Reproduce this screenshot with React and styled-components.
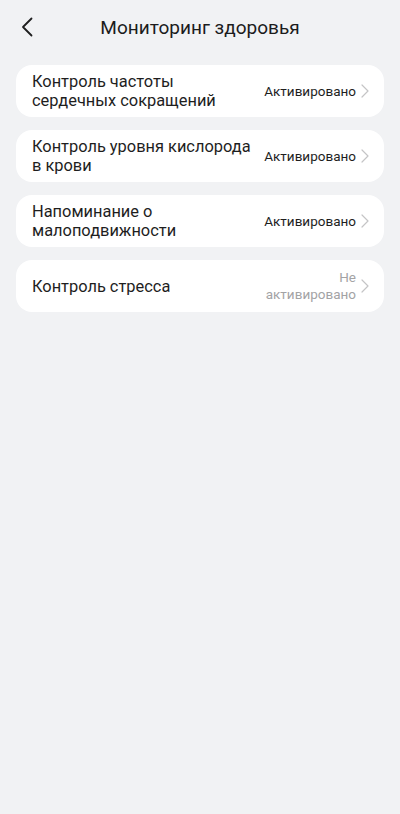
import React from 'react';
import styled, { createGlobalStyle } from 'styled-components';

const GlobalStyle = createGlobalStyle`
  body {
    margin: 0;
    background: #f1f2f4;
    font-family: Roboto, "Noto Sans", "Liberation Sans", sans-serif;
  }
`;

const items = [
  { title: 'Контроль частоты сердечных сокращений', on: true },
  { title: 'Контроль уровня кислорода в крови', on: true },
  { title: 'Напоминание о малоподвижности', on: true },
  { title: 'Контроль стресса', on: false },
];

const App = () => {
  return (
    <Page>
      <GlobalStyle />
      <Header>
        <BackButton aria-label="Назад">
          <svg width="12" height="20" viewBox="0 0 12 20" fill="none">
            <path d="M10.5 1.5 2 10l8.5 8.5" stroke="#1f1f1f" strokeWidth="1.8" strokeLinecap="round" strokeLinejoin="round" />
          </svg>
        </BackButton>
        <Title>Мониторинг здоровья</Title>
      </Header>
      <List>
        {items.map((item) => (
          <Card key={item.title}>
            <Label>{item.title}</Label>
            <Status $on={item.on}>{item.on ? 'Активировано' : 'Не активировано'}</Status>
            <Chevron width="8" height="14" viewBox="0 0 8 14" fill="none">
              <path d="M1 1l6 6-6 6" stroke="#c4c4c6" strokeWidth="1.2" strokeLinecap="round" strokeLinejoin="round" />
            </Chevron>
          </Card>
        ))}
      </List>
    </Page>
  );
};

const Page = styled.div`
  min-height: 814px;
  background: #f1f2f4;
`;

const Header = styled.header`
  position: relative;
  height: 54px;
  display: flex;
  align-items: center;
  justify-content: center;
`;

const BackButton = styled.button`
  position: absolute;
  left: 16px;
  top: 16px;
  width: 22px;
  height: 22px;
  padding: 0;
  border: 0;
  background: none;
  display: flex;
  align-items: center;
  justify-content: center;
`;

const Title = styled.h1`
  margin: 0;
  font-size: 19px;
  font-weight: 400;
  color: #1c1c1c;
`;

const List = styled.div`
  display: flex;
  flex-direction: column;
  gap: 13px;
  padding: 11px 16px;
`;

const Card = styled.div`
  height: 52px;
  box-sizing: border-box;
  background: #fff;
  border-radius: 16px;
  display: flex;
  align-items: center;
  padding: 0 15px 0 16px;
`;

const Label = styled.div`
  flex: 1;
  max-width: 222px;
  font-size: 16.4px;
  line-height: 19px;
  color: #1e1e1e;
`;

const Status = styled.div`
  margin-left: auto;
  width: 95px;
  text-align: right;
  font-size: 13.5px;
  line-height: 17px;
  color: ${(p) => (p.$on ? '#1e1e1e' : '#a3a3a5')};
`;

const Chevron = styled.svg`
  margin-left: 5px;
  flex-shrink: 0;
`;

export default App;
